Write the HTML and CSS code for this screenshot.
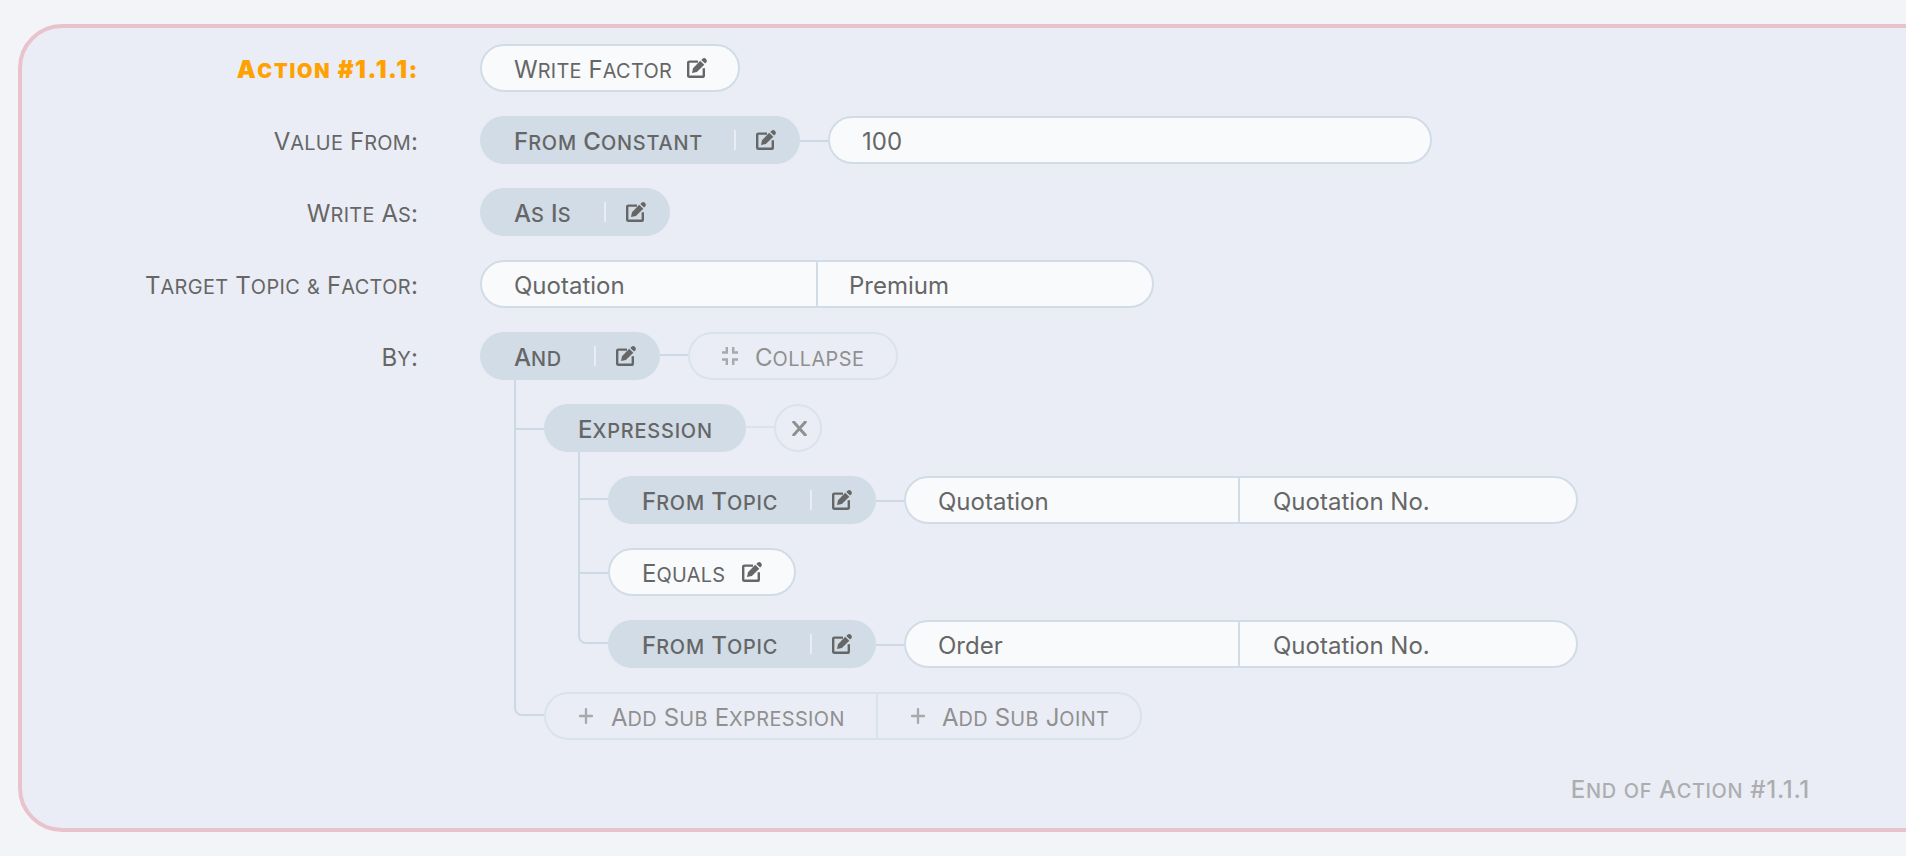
FILE: index.html
```html
<!DOCTYPE html>
<html lang="en">
<head>
<meta charset="utf-8">
<title>Action</title>
<link rel="stylesheet" href="styles.css">
</head>
<body>
<svg class="defs" width="0" height="0">
  <symbol id="edit" viewBox="0 0 20 20">
    <path d="M11 3.6H2.6Q1.2 3.6 1.2 5V17.5Q1.2 18.8 2.6 18.8H15.4Q16.8 18.8 16.8 17.4V10.2" fill="none" stroke="currentColor" stroke-width="2.4"/>
    <path d="M5 15L6 10.2L13.2 2.8L17.3 6.7L9.9 14ZM14.3 1.9L15.8.6Q17.5-.6 19 .9T19.4 4.2L18.1 5.6Z" fill="currentColor"/>
  </symbol>
  <symbol id="compress" viewBox="0 0 16 18">
    <path d="M0 5.5H4.8V0M16 5.5H11.2V0M0 12.5H4.8V18M16 12.5H11.2V18" fill="none" stroke="currentColor" stroke-width="2.4"/>
  </symbol>
  <symbol id="plus" viewBox="0 0 14 16">
    <path d="M7 1V15M1 8H13" fill="none" stroke="currentColor" stroke-width="2.3" stroke-linecap="round"/>
  </symbol>
  <symbol id="cross" viewBox="0 0 14 14">
    <path d="M1.6 1L12.4 13M12.4 1L1.6 13" fill="none" stroke="currentColor" stroke-width="2.8" stroke-linecap="round"/>
  </symbol>
</svg>
<main class="card">
  <div class="row">
    <div class="label title">A<span>ction</span> #1.1.1:</div>
    <div class="pill light w-write"><b class="t">W<span>rite</span> F<span>actor</span></b><svg class="edit"><use href="#edit"/></svg></div>
  </div>
  <div class="row">
    <div class="label">V<span>alue</span> F<span>rom</span>:</div>
    <div class="pill w-const"><b class="t">F<span>rom</span> C<span>onstant</span></b><i class="sep"></i><svg class="edit"><use href="#edit"/></svg></div>
    <i class="link"></i>
    <div class="field w-value"><div class="cell">100</div></div>
  </div>
  <div class="row">
    <div class="label">W<span>rite</span> A<span>s</span>:</div>
    <div class="pill w-asis"><b class="t">A<span>s</span> I<span>s</span></b><i class="sep"></i><svg class="edit"><use href="#edit"/></svg></div>
  </div>
  <div class="row">
    <div class="label target">T<span>arget</span> T<span>opic</span> <span>&amp;</span> F<span>actor</span>:</div>
    <div class="field w-pair"><div class="cell">Quotation</div><div class="cell second">Premium</div></div>
  </div>
  <div class="row">
    <div class="label">B<span>y</span>:</div>
    <div class="tree">
      <div class="line">
        <div class="pill w-and"><b class="t">A<span>nd</span></b><i class="sep"></i><svg class="edit"><use href="#edit"/></svg></div>
        <i class="link high"></i>
        <div class="ghost w-collapse"><div class="act"><svg class="compress"><use href="#compress"/></svg><b class="t">C<span>ollapse</span></b></div></div>
      </div>
      <div class="kids">
        <div class="kid">
          <div class="rail"><i class="tick low"></i></div>
          <div class="tree">
            <div class="line">
              <div class="pill w-expr"><b class="t">E<span>xpression</span></b></div>
              <i class="link high faint"></i>
              <div class="ghost round"><svg class="cross"><use href="#cross"/></svg></div>
            </div>
            <div class="kids">
              <div class="kid">
                <div class="rail"><i class="tick"></i></div>
                <div class="line">
                  <div class="pill w-topic"><b class="t">F<span>rom</span> T<span>opic</span></b><i class="sep"></i><svg class="edit"><use href="#edit"/></svg></div>
                  <i class="link"></i>
                  <div class="field w-pair"><div class="cell narrow">Quotation</div><div class="cell second factor">Quotation No.</div></div>
                </div>
              </div>
              <div class="kid">
                <div class="rail"><i class="tick low"></i></div>
                <div class="line"><div class="pill light w-equals"><b class="t">E<span>quals</span></b><svg class="edit"><use href="#edit"/></svg></div></div>
              </div>
              <div class="kid">
                <div class="rail last"></div>
                <div class="line">
                  <div class="pill w-topic"><b class="t">F<span>rom</span> T<span>opic</span></b><i class="sep"></i><svg class="edit"><use href="#edit"/></svg></div>
                  <i class="link"></i>
                  <div class="field w-pair"><div class="cell narrow">Order</div><div class="cell second factor">Quotation No.</div></div>
                </div>
              </div>
            </div>
          </div>
        </div>
        <div class="kid">
          <div class="rail last"></div>
          <div class="line"><div class="ghost w-add">
            <div class="act add"><svg class="plus"><use href="#plus"/></svg><b class="t">A<span>dd</span> S<span>ub</span> E<span>xpression</span></b></div>
            <div class="act add joint"><svg class="plus"><use href="#plus"/></svg><b class="t">A<span>dd</span> S<span>ub</span> J<span>oint</span></b></div>
          </div></div>
        </div>
      </div>
    </div>
  </div>
  <div class="end">E<span>nd</span> <span>of</span> A<span>ction</span> #1.1.1</div>
</main>
</body>
</html>
```
FILE: styles.css
```css
* { box-sizing: border-box; }
html, body { margin: 0; height: 100%; overflow: hidden; }
body {
  background: #f2f4f8;
  color: #666;
  font-family: Inter, "Liberation Sans", sans-serif;
  font-size: 24px;
  line-height: 48px;
  padding: 24px 0 0 18px;
}
.defs { display: none; }
svg { flex: none; display: block; }
.card {
  width: 1960px;
  height: 808px;
  border: 4px solid #e9c3cb;
  border-radius: 44px;
  background: #eaedf5;
  padding: 16px 0 0;
  display: flex;
  flex-direction: column;
  gap: 24px;
}
.row { display: flex; align-items: flex-start; }
.label {
  width: 396px;
  margin-right: 62px;
  padding-top: 2px;
  height: 48px;
  text-align: right;
  white-space: nowrap;
}
.label span, .t span, .end span { font-size: .83em; text-transform: uppercase; letter-spacing: .3px; }
.label.target span { letter-spacing: .4px; }
.title { color: #ffa100; font-weight: 900; letter-spacing: 1.5px; width: 397px; margin-right: 61px; }
.label.title span { letter-spacing: 1.8px; }
.pill {
  height: 48px;
  border-radius: 24px;
  background: #d1dce6;
  padding: 0 24px 0 34px;
  display: flex;
  align-items: center;
  justify-content: space-between;
  font-weight: 500;
}
.t { font-weight: inherit; white-space: nowrap; padding-top: 2px; height: 48px; }
.act .t { font-weight: 400; }
.pill .t span { letter-spacing: .8px; }
.light { background: #f9fafc; border: 2px solid #d1dce6; padding: 0 31px 0 32px; font-weight: 400; }
.light .t { height: 44px; line-height: 44px; }
.pill.light .t span { letter-spacing: .3px; }
.sep { width: 2px; height: 20px; background: #e8edf4; margin: 0 20px 0 auto; }
.edit { width: 20px; height: 20px; }
.link { width: 28px; height: 2px; background: #cdd8e5; margin-top: 24px; }
.link.high { margin-top: 22px; }
.link.faint { background: #dae3ec; }
.field {
  height: 48px;
  border: 2px solid #d1dce6;
  border-radius: 24px;
  background: #f9fafc;
  display: flex;
  line-height: 44px;
}
.cell { padding: 2px 0 0 32px; width: 334px; height: 44px; white-space: nowrap; }
.cell.second { border-left: 2px solid #d1dce6; padding-left: 31px; }
.cell.narrow { width: 332px; }
.cell.factor { padding-left: 33px; }
.ghost {
  height: 48px;
  border: 2px solid #dae3ec;
  border-radius: 24px;
  display: flex;
  line-height: 44px;
  color: #909090;
}
.act { display: flex; align-items: center; padding-left: 32px; }
.act .t { height: 44px; }
.act .t span { letter-spacing: .4px; }
.compress { width: 16px; height: 18px; margin: 0 17px 0 0; color: #a7a9ac; }
.plus { width: 14px; height: 16px; margin: -1px 18px 0 1px; color: #a7a9ac; }
.joint { border-left: 2px solid #dae3ec; flex: 1; }
.joint .plus { margin-right: 17px; }
.add:first-child { width: 330px; }
.round { width: 48px; align-items: center; justify-content: center; }
.cross { width: 15px; height: 15px; margin-left: 2px; }
.line { display: flex; align-items: flex-start; }
.kids { padding-left: 34px; }
.kid { display: flex; align-items: stretch; }
.kid > .line, .kid > .tree { padding-top: 24px; }
.rail { width: 30px; border-left: 2px solid #cdd8e5; }
.tick { display: block; height: 48px; border-bottom: 2px solid #cdd8e5; }
.tick.low { height: 50px; }
.rail.last { height: 48px; border-bottom: 2px solid #cdd8e5; border-bottom-left-radius: 8px; }
.w-write { width: 260px; }
.w-const { width: 320px; }
.w-value { width: 604px; }
.w-asis { width: 190px; }
.w-pair { width: 674px; }
.w-and { width: 180px; }
.w-collapse { width: 210px; }
.w-expr { width: 202px; }
.w-topic { width: 268px; }
.w-equals { width: 188px; padding-right: 32px; }
.w-add { width: 598px; }
.end { color: #adadb0; font-weight: 500; letter-spacing: .7px; text-align: right; width: 1788px; white-space: nowrap; padding-top: 2px; }
.end span { letter-spacing: .6px; }
```
